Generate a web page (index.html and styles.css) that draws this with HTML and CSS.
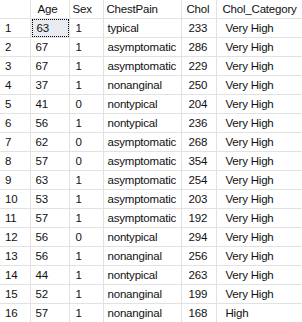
FILE: index.html
```html
<!DOCTYPE html>
<html>
<head>
<meta charset="utf-8">
<link rel="stylesheet" href="styles.css">
</head>
<body>
<table class="grid">
  <colgroup>
    <col class="c-num"><col class="c-age"><col class="c-sex"><col class="c-pain"><col class="c-chol"><col class="c-cat">
  </colgroup>
  <thead>
    <tr><th></th><th class="h-age">Age</th><th class="h-sex">Sex</th><th class="h-pain">ChestPain</th><th class="h-chol">Chol</th><th class="h-cat">Chol_Category</th></tr>
  </thead>
  <tbody>
    <tr><td class="num">1</td><td class="age sel"><span class="focus">63</span></td><td class="sex">1</td><td class="pain">typical</td><td class="chol">233</td><td class="cat">Very High</td></tr>
    <tr><td class="num">2</td><td class="age">67</td><td class="sex">1</td><td class="pain">asymptomatic</td><td class="chol">286</td><td class="cat">Very High</td></tr>
    <tr><td class="num">3</td><td class="age">67</td><td class="sex">1</td><td class="pain">asymptomatic</td><td class="chol">229</td><td class="cat">Very High</td></tr>
    <tr><td class="num">4</td><td class="age">37</td><td class="sex">1</td><td class="pain">nonanginal</td><td class="chol">250</td><td class="cat">Very High</td></tr>
    <tr><td class="num">5</td><td class="age">41</td><td class="sex">0</td><td class="pain">nontypical</td><td class="chol">204</td><td class="cat">Very High</td></tr>
    <tr><td class="num">6</td><td class="age">56</td><td class="sex">1</td><td class="pain">nontypical</td><td class="chol">236</td><td class="cat">Very High</td></tr>
    <tr><td class="num">7</td><td class="age">62</td><td class="sex">0</td><td class="pain">asymptomatic</td><td class="chol">268</td><td class="cat">Very High</td></tr>
    <tr><td class="num">8</td><td class="age">57</td><td class="sex">0</td><td class="pain">asymptomatic</td><td class="chol">354</td><td class="cat">Very High</td></tr>
    <tr><td class="num">9</td><td class="age">63</td><td class="sex">1</td><td class="pain">asymptomatic</td><td class="chol">254</td><td class="cat">Very High</td></tr>
    <tr><td class="num">10</td><td class="age">53</td><td class="sex">1</td><td class="pain">asymptomatic</td><td class="chol">203</td><td class="cat">Very High</td></tr>
    <tr><td class="num">11</td><td class="age">57</td><td class="sex">1</td><td class="pain">asymptomatic</td><td class="chol">192</td><td class="cat">Very High</td></tr>
    <tr><td class="num">12</td><td class="age">56</td><td class="sex">0</td><td class="pain">nontypical</td><td class="chol">294</td><td class="cat">Very High</td></tr>
    <tr><td class="num">13</td><td class="age">56</td><td class="sex">1</td><td class="pain">nonanginal</td><td class="chol">256</td><td class="cat">Very High</td></tr>
    <tr><td class="num">14</td><td class="age">44</td><td class="sex">1</td><td class="pain">nontypical</td><td class="chol">263</td><td class="cat">Very High</td></tr>
    <tr><td class="num">15</td><td class="age">52</td><td class="sex">1</td><td class="pain">nonanginal</td><td class="chol">199</td><td class="cat">Very High</td></tr>
    <tr><td class="num">16</td><td class="age">57</td><td class="sex">1</td><td class="pain">nonanginal</td><td class="chol">168</td><td class="cat">High</td></tr>
  </tbody>
</table>
</body>
</html>
```

FILE: styles.css
```css
html, body {
  margin: 0;
  padding: 0;
  background: #ffffff;
  overflow: hidden;
}

.grid {
  border-collapse: collapse;
  table-layout: fixed;
  width: 302px;
  font-family: "Liberation Sans", Arial, sans-serif;
  font-size: 11.5px;
  letter-spacing: -0.2px;
  color: #111111;
}

.c-num { width: 30px; }
.c-age { width: 39px; }
.c-sex { width: 34px; }
.c-pain { width: 78px; }
.c-chol { width: 35px; }
.c-cat { width: 86px; }

.grid th,
.grid td {
  height: 18px;
  padding: 0 0 0 5px;
  border-right: 1px solid #e2e2e2;
  border-bottom: 1px solid #e2e2e2;
  text-align: left;
  font-weight: normal;
  white-space: nowrap;
  overflow: hidden;
  vertical-align: middle;
  line-height: 18px;
}

.grid th:last-child,
.grid td:last-child {
  border-right: none;
}

.grid th.h-age { padding-left: 7px; }
.grid th.h-sex { padding-left: 3px; }
.grid th.h-pain { padding-left: 3px; }
.grid th.h-chol { padding-left: 5px; }
.grid th.h-cat { padding-left: 6px; }

.grid td.num { padding-left: 5px; }
.grid td.age { padding-left: 5px; }
.grid td.sex { padding-left: 6px; }
.grid td.pain { padding-left: 4px; }
.grid td.chol { padding-left: 7px; }
.grid td.cat { padding-left: 9px; }

.grid td.sel {
  padding: 0;
  background: #e8ebf1;
}

.focus {
  display: block;
  height: 16px;
  line-height: 16px;
  margin: 0 0 0 1px;
  padding-left: 4px;
  border: 1px dotted #000000;
}
```
